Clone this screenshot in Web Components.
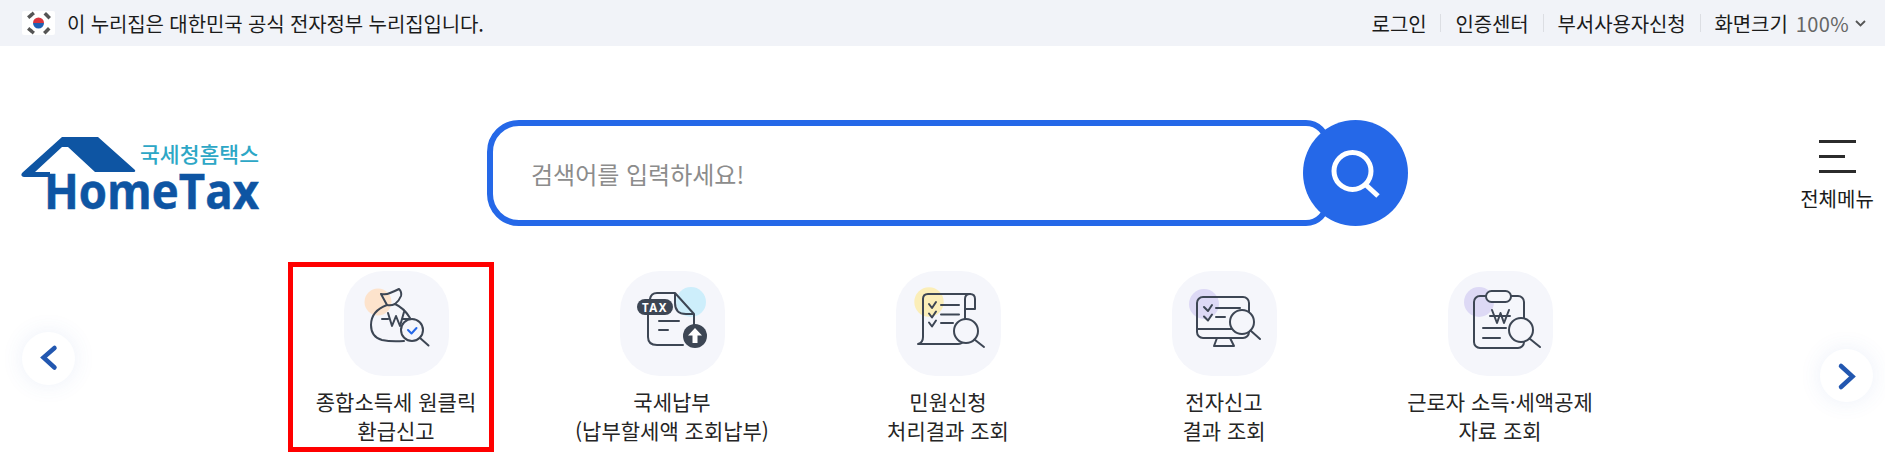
<!DOCTYPE html>
<html lang="ko">
<head>
<meta charset="utf-8">
<title>국세청 홈택스</title>
<style>
  html, body { margin: 0; background: #fff; }
  body { min-height: 463px; font-family: "Noto Sans CJK KR", "Noto Sans", sans-serif; color: #222; }
</style>
</head>
<body>
<gov-bar></gov-bar>
<site-header></site-header>
<quick-menu>
  <round-arrow dir="left" slot="arrows"></round-arrow>
  <round-arrow dir="right" slot="arrows"></round-arrow>
  <quick-item icon="bag" marked>종합소득세 원클릭<br>환급신고</quick-item>
  <quick-item icon="tax">국세납부<br>(납부할세액 조회납부)</quick-item>
  <quick-item icon="scroll">민원신청<br>처리결과 조회</quick-item>
  <quick-item icon="monitor">전자신고<br>결과 조회</quick-item>
  <quick-item icon="clipboard">근로자 소득·세액공제<br>자료 조회</quick-item>
</quick-menu>

<script>
const INK = '#3d4654';
const TILE = '#f5f6fb';

function glass(cx, cy, r, hx, hy) {
  const k = r * 0.707;
  return `<circle cx="${cx}" cy="${cy}" r="${r}" fill="${TILE}"/>
    <path d="M${cx + k} ${cy + k}L${hx} ${hy}"/>`;
}

const ICONS = {
  bag: `<circle cx="34" cy="31" r="13.5" fill="#fde3cc" stroke="none"/>
    <path d="M43 34L37 23Q42 24 46 22Q51 20 55 18Q58 21 57 25Q55 30 51 33Q47 35 43 34Z"/>
    <path d="M43 34Q27 40 27 54Q27 66 38 69Q47 71 60 70M51 33Q60 37 66 47"/>
    <path d="M38 48H44M59 48H65M44 42L48 55L52 45L56 55L60 41"/>
    ${glass(68, 59, 11, 84.500, 74.500)}
    <path d="M64 59L67.500 62.500L72.500 57" stroke="#2568e8"/>`,
  tax: `<circle cx="71" cy="31" r="15" fill="#cdeefb" stroke="none"/>
    <path d="M28 44V66Q28 74 37 74H63M30 28Q31 22 37 22H55L74 43V54M55 22V32Q55 43 66 43H74"/>
    <path d="M39 50H59M39 59H48"/>
    <rect x="17" y="28" width="36" height="16" rx="8" fill="${INK}" stroke="none"/>
    <text x="35" y="40.500" text-anchor="middle" fill="#fff" stroke="none" font-family="'Noto Sans', sans-serif" font-weight="700" font-size="11.500" letter-spacing="1.500">TAX</text>
    <circle cx="75" cy="65" r="12" fill="${INK}" stroke="none"/>
    <path d="M75 57L82 64.500H77.500V72H72.500V64.500H68Z" fill="#fff" stroke="none"/>`,
  scroll: `<circle cx="33" cy="31" r="14.700" fill="#fbeeb8" stroke="none"/>
    <path d="M22 73H62Q66 73 68 70M22 73Q27 72 27 66V28Q27 23 32 23H74"/>
    <path d="M69 48V28Q69 23 74 23Q79 23 79 28V38H69"/>
    <path d="M33 33L36 37L40 31M33 42.500L36 46.500L40 40.500M33 51.500L36 55.500L40 49.500"/>
    <path d="M45 34H63M45 43.500H63M45 52H57"/>
    ${glass(70, 60, 12, 88, 76)}`,
  monitor: `<circle cx="32" cy="33" r="15" fill="#ddd9f5" stroke="none"/>
    <rect x="25" y="26" width="52" height="41" rx="6"/>
    <path d="M25 58H62M45 67L42 75H62L58 67"/>
    <path d="M32 36L36 40L40 34M32 45.500L36 49.500L40 43.500"/>
    <path d="M44 37H68M44 46H53"/>
    ${glass(70, 51, 12, 88, 68)}`,
  clipboard: `<circle cx="31" cy="31" r="15" fill="#ddd9f5" stroke="none"/>
    <rect x="26" y="25" width="50" height="52" rx="6"/>
    <rect x="38" y="20" width="25" height="11" rx="5.500" fill="${TILE}"/>
    <path d="M42 45H62M44 39L49 52L52.500 42L56 52L61 39"/>
    <path d="M35 57H58M35 67H52"/>
    ${glass(73, 59, 12, 92, 76)}`
};

class GovBar extends HTMLElement {
  constructor() {
    super();
    this.attachShadow({ mode: 'open' });
    const links = ['로그인', '인증센터', '부서사용자신청'];
    this.shadowRoot.innerHTML = `
      <style>
        :host {
          display: flex;
          align-items: center;
          height: 46px;
          padding: 0 19px 0 22px;
          background: #f1f3f8;
          font-size: 20px;
          letter-spacing: -0.12px;
          color: #1b1b1b;
        }
        .flag {
          width: 33px;
          height: 24px;
          margin-right: 12px;
          flex: none;
        }
        .notice { flex: 1; white-space: nowrap; }
        nav { display: flex; align-items: center; white-space: nowrap; }
        .sep {
          width: 1px;
          height: 18px;
          margin: 0 14px;
          background: #dcdee3;
        }
        .pct { margin-left: 8px; color: #666; letter-spacing: 0.4px; }
        .arrow { width: 11px; height: 7px; margin-left: 6px; }
      </style>
      <svg class="flag" viewBox="0 0 33 24">
        <rect width="33" height="24" rx="2" fill="#fff"/>
        <path d="M11 12a5.500 5.500 0 0 1 11 0z" fill="#d9343f"/>
        <path d="M11 12a5.500 5.500 0 0 0 11 0z" fill="#1f5fb4"/>
        <g stroke="#555" stroke-width="3.500" stroke-linecap="square">
          <path d="M7.500 5.500l3 -2.500M24 3.500l2.500 2.500M7.500 18.500l3 2.500M23.500 21l2.500 -2.500" stroke-dasharray="1.500 1"/>
        </g>
      </svg>
      <span class="notice">이 누리집은 대한민국 공식 전자정부 누리집입니다.</span>
      <nav>
        ${links.map(l => `<span>${l}</span><i class="sep"></i>`).join('')}
        <span>화면크기</span>
        <span class="pct">100%</span>
        <svg class="arrow" viewBox="0 0 11 7"><path d="M1 1l4.500 4.500 4.500 -4.500" fill="none" stroke="#555" stroke-width="1.800"/></svg>
      </nav>
    `;
  }
}

class SiteHeader extends HTMLElement {
  constructor() {
    super();
    this.attachShadow({ mode: 'open' });
    this.shadowRoot.innerHTML = `
      <style>
        :host {
          display: flex;
          align-items: center;
          padding: 74px 12px 0 22px;
        }
        .logo { width: 238px; height: 73px; flex: none; margin-right: 227px; overflow: visible; }
        .search { display: flex; align-items: center; }
        .box {
          box-sizing: border-box;
          width: 843px;
          height: 106px;
          padding-left: 38px;
          display: flex;
          align-items: center;
          border: 6px solid #2568e8;
          border-radius: 32px 24px 24px 32px;
          font-size: 24px;
          color: #8c8c8c;
        }
        .go {
          width: 105px;
          height: 106px;
          margin-left: -27px;
          border-radius: 50%;
          background: #2568e8;
          flex: none;
        }
        .go svg { display: block; }
        .all {
          margin-left: auto;
          margin-top: 6px;
          width: 72px;
          display: flex;
          flex-direction: column;
          align-items: center;
          font-size: 20px;
          color: #1b1b1b;
          white-space: nowrap;
        }
        .bars { display: flex; flex-direction: column; gap: 12px; width: 37px; margin-bottom: 11px; }
        .bars i { display: block; height: 3px; background: #2b2b2b; }
        .bars i:nth-child(2) { width: 26px; }
      </style>
      <svg class="logo" viewBox="22 137 238 73">
        <path d="M22 173L62 137H98L135 170Q136 172 133 172H95L68 147H62L35 172H50V177H24Q20 176 22 173Z" fill="#0e55a3"/>
        <text x="44" y="209" fill="#0e55a3" stroke="#0e55a3" stroke-width="0.500" font-family="'Open Sans', 'Noto Sans', sans-serif" font-weight="700" font-size="48" textLength="215" lengthAdjust="spacingAndGlyphs">HomeTax</text>
        <text x="140" y="162" fill="#2da7c6" font-family="'Noto Sans CJK KR', sans-serif" font-weight="500" font-size="21" textLength="119" lengthAdjust="spacingAndGlyphs">국세청홈택스</text>
      </svg>
      <div class="search">
        <div class="box">검색어를 입력하세요!</div>
        <div class="go">
          <svg width="105" height="106" viewBox="0 0 105 106">
            <circle cx="49.500" cy="51" r="18.500" fill="none" stroke="#fff" stroke-width="5"/>
            <path d="M63 65L75 76" stroke="#fff" stroke-width="5"/>
          </svg>
        </div>
      </div>
      <div class="all">
        <div class="bars"><i></i><i></i><i></i></div>
        <span>전체메뉴</span>
      </div>
    `;
  }
}

class QuickMenu extends HTMLElement {
  constructor() {
    super();
    this.attachShadow({ mode: 'open' });
    this.shadowRoot.innerHTML = `
      <style>
        :host {
          display: flex;
          position: relative;
          margin-top: 45px;
          padding-left: 258px;
        }
      </style>
      <slot name="arrows"></slot>
      <slot></slot>
    `;
  }
}

class QuickItem extends HTMLElement {
  constructor() {
    super();
    this.attachShadow({ mode: 'open' });
    const icon = ICONS[this.getAttribute('icon')] || '';
    this.shadowRoot.innerHTML = `
      <style>
        :host {
          display: flex;
          flex-direction: column;
          align-items: center;
          position: relative;
          width: 276px;
          flex: none;
        }
        :host([marked])::after {
          content: '';
          position: absolute;
          left: 30px;
          top: -9px;
          width: 196px;
          height: 180px;
          border: 5px solid #ff0000;
        }
        .tile {
          width: 105px;
          height: 105px;
          border-radius: 40px;
          background: ${TILE};
        }
        svg { display: block; }
        .label {
          margin-top: 11px;
          font-size: 21px;
          line-height: 29px;
          text-align: center;
          white-space: nowrap;
          color: #252525;
        }
      </style>
      <div class="tile">
        <svg width="105" height="105" viewBox="0 0 105 105">
          <g fill="none" stroke="${INK}" stroke-width="2" stroke-linecap="round" stroke-linejoin="round">${icon}</g>
        </svg>
      </div>
      <div class="label"><slot></slot></div>
    `;
  }
}

class RoundArrow extends HTMLElement {
  constructor() {
    super();
    this.attachShadow({ mode: 'open' });
    const left = this.getAttribute('dir') === 'left';
    this.shadowRoot.innerHTML = `
      <style>
        :host {
          position: absolute;
          ${left ? 'left: 22px; top: 61px;' : 'right: 12px; top: 78px;'}
          width: 53px;
          height: 53px;
          border-radius: 50%;
          background: #fff;
          box-shadow: 0 0 22px rgba(70, 110, 200, 0.1);
        }
        svg { display: block; }
      </style>
      <svg width="53" height="53" viewBox="0 0 53 53">
        <path d="${left ? 'M32.500 16L21.500 25.500L32.500 35.500' : 'M21 17L32.500 27.500L21 38'}"
          fill="none" stroke="#2257b0" stroke-width="4.500" stroke-linecap="round" stroke-linejoin="miter"/>
      </svg>
    `;
  }
}

customElements.define('gov-bar', GovBar);
customElements.define('site-header', SiteHeader);
customElements.define('quick-menu', QuickMenu);
customElements.define('quick-item', QuickItem);
customElements.define('round-arrow', RoundArrow);
</script>
</body>
</html>
